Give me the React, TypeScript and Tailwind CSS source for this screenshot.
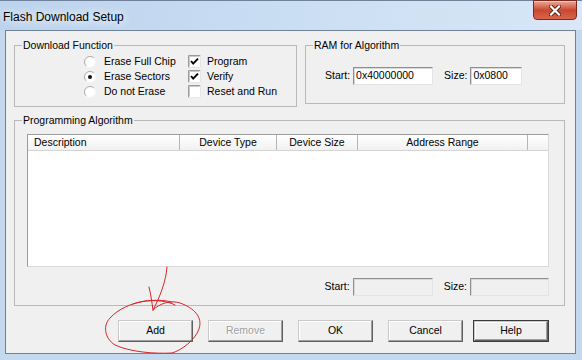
import React from "react";

function Radio({ checked }: { checked?: boolean }) {
  return (
    <svg width="12" height="12" viewBox="0 0 12 12" className="shrink-0">
      <circle cx="6" cy="6" r="5.5" fill="#fff" />
      <path d="M2.1 9.9 A5.5 5.5 0 0 1 9.9 2.1" fill="none" stroke="#a9a9a9" strokeWidth="1" />
      <path d="M9.9 2.1 A5.5 5.5 0 0 1 2.1 9.9" fill="none" stroke="#f4f4f4" strokeWidth="1" />
      {checked && <circle cx="6" cy="6" r="2" fill="#111" />}
    </svg>
  );
}

function CheckBox({ checked }: { checked?: boolean }) {
  return (
    <svg width="13" height="13" viewBox="0 0 13 13" className="shrink-0">
      <rect x="0" y="0" width="13" height="13" fill="#fff" />
      <path d="M0.5 12.5 V0.5 H12.5" fill="none" stroke="#9a9a9a" />
      <path d="M1.5 11.5 V1.5 H11.5" fill="none" stroke="#c8c8c8" />
      <path d="M12.5 0.5 V12.5 H0.5" fill="none" stroke="#e6e6e6" />
      {checked && <path d="M3 6 L5.2 8.6 L10 3.6" fill="none" stroke="#000" strokeWidth="1.9" />}
    </svg>
  );
}

function Field({ value, w, disabled }: { value?: string; w: string; disabled?: boolean }) {
  return (
    <div
      className={`${w} h-[18px] flex items-center pl-[2px] border border-t-[#8f8f8f] border-l-[#8f8f8f] border-r-[#e4e4e4] border-b-[#e4e4e4] shadow-[inset_1px_1px_0_#d8d8d8] ${
        disabled ? "bg-[#f0f0f0]" : "bg-white"
      }`}
    >
      {value}
    </div>
  );
}

function Button({ label, disabled, def, cls }: { label: string; disabled?: boolean; def?: boolean; cls?: string }) {
  return (
    <div className={`${cls ?? ""} ${def ? "border border-[#3c3c3c]" : ""}`}>
      <div
        className={`${def ? "w-[74px] h-[20px]" : "w-[75px] h-[22px]"} flex items-center justify-center bg-[#f0f0f0] border border-t-[#c9c9c9] border-l-[#c9c9c9] border-r-[#5f5f5f] border-b-[#5f5f5f] shadow-[inset_-1px_-1px_0_#a0a0a0,inset_1px_1px_0_#ffffff] ${
          disabled ? "text-[#a0a0a0] [text-shadow:1px_1px_0_#fff]" : "text-black"
        }`}
      >
        {label}
      </div>
    </div>
  );
}

export default function App() {
  return (
    <div className="w-[582px] h-[360px] relative overflow-hidden bg-[#c4d8ee] flex flex-col font-['Liberation_Sans',Arial,sans-serif] text-[10.5px] text-black">
      {/* Title bar */}
      <div className="h-[30px] flex items-start justify-between border-t border-[#70829a] bg-gradient-to-r from-[#bcd3ed] via-[#cadef3] to-[#d9e7f6]">
        <div className="pl-[3px] pt-[9px] text-[12px] leading-[15px] text-black [text-shadow:0_0_8px_#fff,0_0_12px_#fff]">
          Flash Download Setup
        </div>
        <div className="mr-[5px] w-[44px] h-[20px] -mt-px rounded-b-[4px] border border-[#7a2a1c] bg-gradient-to-b from-[#e9a99a] via-[#c9472f] to-[#d7654b] flex items-center justify-center shadow-[inset_0_1px_0_#f3c6bb]">
          <svg width="12" height="11" viewBox="0 0 12 11">
            <path d="M2 1.5 L10 9.5 M10 1.5 L2 9.5" stroke="#5a1c12" strokeWidth="4" strokeLinecap="square" />
            <path d="M2 1.5 L10 9.5 M10 1.5 L2 9.5" stroke="#fff" strokeWidth="2.2" strokeLinecap="square" />
          </svg>
        </div>
      </div>

      {/* Body */}
      <div className="flex h-[324px]">
        <div className="w-[5px]" />
        <div className="w-[571px] h-[324px] bg-[#f0f0f0] border border-[#6e8199]">
          {/* Row 1 */}
          <div className="flex pt-[8px] pl-[8px]">
            <fieldset className="w-[283px] h-[68px] border border-[#b9b9b9]">
              <legend className="ml-[7px] px-[1px] leading-[13px]">Download Function</legend>
              <div className="flex pt-[2px] pl-[69px]">
                <div className="w-[104px] flex flex-col">
                  {[
                    ["Erase Full Chip", false],
                    ["Erase Sectors", true],
                    ["Do not Erase", false],
                  ].map(([t, c]) => (
                    <div key={t as string} className="h-[15px] flex items-center gap-[8px]">
                      <Radio checked={c as boolean} />
                      <span>{t}</span>
                    </div>
                  ))}
                </div>
                <div className="flex flex-col">
                  {[
                    ["Program", true],
                    ["Verify", true],
                    ["Reset and Run", false],
                  ].map(([t, c]) => (
                    <div key={t as string} className="h-[15px] flex items-center gap-[6px]">
                      <CheckBox checked={c as boolean} />
                      <span>{t}</span>
                    </div>
                  ))}
                </div>
              </div>
            </fieldset>

            <fieldset className="ml-[8px] w-[260px] h-[65px] border border-[#b9b9b9]">
              <legend className="ml-[7px] px-[1px] leading-[13px]">RAM for Algorithm</legend>
              <div className="flex items-center mt-[15px] pl-[19px]">
                <span>Start:</span>
                <div className="ml-[3px]">
                  <Field value="0x40000000" w="w-[80px]" />
                </div>
                <span className="ml-[11px]">Size:</span>
                <div className="ml-[3px]">
                  <Field value="0x0800" w="w-[52px]" />
                </div>
              </div>
            </fieldset>
          </div>

          {/* Programming Algorithm */}
          <fieldset className="mt-[7px] ml-[8px] w-[551px] h-[192px] border border-[#b9b9b9]">
            <legend className="ml-[7px] px-[1px] leading-[13px]">Programming Algorithm</legend>
            <div className="pt-[7px] pl-[12px]">
              <div className="w-[522px] h-[133px] bg-white border border-t-[#9c9c9c] border-l-[#9c9c9c] border-r-[#dadada] border-b-[#dadada]">
                <div className="flex h-[16px] bg-gradient-to-b from-[#ffffff] to-[#f1f1f1] border-b border-[#d5d5d5]">
                  <div className="w-[152px] pl-[6px] flex items-center border-r border-[#b5b5b5]">Description</div>
                  <div className="w-[97px] flex items-center justify-center border-r border-[#b5b5b5]">Device Type</div>
                  <div className="w-[81px] flex items-center justify-center border-r border-[#b5b5b5]">Device Size</div>
                  <div className="w-[170px] flex items-center justify-center border-r border-[#b5b5b5]">Address Range</div>
                  <div className="flex-1" />
                </div>
              </div>
              <div className="w-[522px] flex items-center justify-end mt-[11px]">
                <span>Start:</span>
                <div className="ml-[3px]">
                  <Field w="w-[80px]" disabled />
                </div>
                <span className="ml-[11px]">Size:</span>
                <div className="ml-[3px]">
                  <Field w="w-[79px]" disabled />
                </div>
              </div>
            </div>
          </fieldset>

          {/* Buttons */}
          <div className="flex mt-[14px] pl-[112px]">
            <Button label="Add" />
            <Button label="Remove" disabled cls="ml-[15px]" />
            <Button label="OK" cls="ml-[15px]" />
            <Button label="Cancel" cls="ml-[15px]" />
            <Button label="Help" def cls="ml-[10px]" />
          </div>
        </div>
        <div className="w-[6px]" />
      </div>

      {/* Red hand-drawn annotation */}
      <svg className="absolute left-0 top-0 pointer-events-none" width="582" height="360" viewBox="0 0 582 360">
        <g fill="none" stroke="#d8262a" strokeWidth="1" strokeLinecap="round">
          <path d="M167 267 C166 281 160 297 153 310" />
          <path d="M149 287 C151 295 152 303 153 310" />
          <path d="M153 310 C160 303 171 300 180 303 C194 308 203 317 199 329 C195 340 182 350 172 353 C155 354 130 352 115 345 C104 338 103 325 110 318 C118 309 132 303 145 301 C156 300 168 301 175 305" />
          <path d="M133 304 C145 300 160 299 172 302" />
        </g>
      </svg>
    </div>
  );
}
